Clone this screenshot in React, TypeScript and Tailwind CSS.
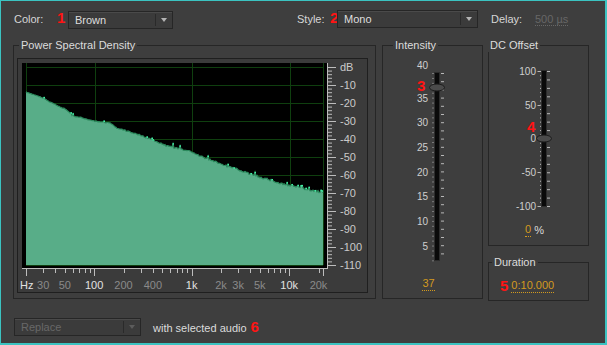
import React from 'react';

const anchors: [number, number][] = [
  [26, 92], [43, 98], [50, 102], [67, 110], [73, 116], [80, 117], [93, 121], [110, 123],
  [117, 128], [140, 135], [150, 139], [167, 146], [180, 149], [190, 151], [200, 156],
  [213, 161], [230, 167], [253, 175], [280, 183], [313, 191], [323, 192],
];

function rng(seed: number) {
  let a = seed;
  return () => {
    a |= 0;
    a = (a + 0x6d2b79f5) | 0;
    let t = Math.imul(a ^ (a >>> 15), 1 | a);
    t = (t + Math.imul(t ^ (t >>> 7), 61 | t)) ^ t;
    return ((t ^ (t >>> 14)) >>> 0) / 4294967296;
  };
}

function baseAt(x: number) {
  for (let i = 0; i < anchors.length - 1; i++) {
    const [x0, y0] = anchors[i];
    const [x1, y1] = anchors[i + 1];
    if (x >= x0 && x <= x1) return y0 + ((y1 - y0) * (x - x0)) / (x1 - x0);
  }
  return anchors[anchors.length - 1][1];
}

const rand = rng(7);
const spectrum: { x: number; y: number; spike: boolean }[] = [];
for (let x = 26; x <= 323; x++) {
  const p = (x - 26) / 297;
  let y = baseAt(x) + (rand() - 0.5) * (0.6 + p * 1.6);
  const spike = rand() < 0.05 + p * 0.12;
  if (spike) y -= 1 + rand() * 2.2;
  spectrum.push({ x, y, spike });
}
const linePts = spectrum.map((s) => `${s.x},${s.y.toFixed(1)}`).join(' ');
const fillPath = `M26,265 L${spectrum.map((s) => `${s.x},${s.y.toFixed(1)}`).join(' L')} L323,265 Z`;

const fx = (f: number) => 26 + 97.5 * Math.log10(f / 20);
const hzTicks = [20, 30, 40, 50, 60, 70, 80, 90, 100, 200, 300, 400, 500, 600, 700, 800, 900, 1000, 2000, 3000, 4000, 5000, 6000, 7000, 8000, 9000, 10000, 20000];
const hzLabels: [string, number, boolean][] = [
  ['30', 30, false], ['50', 50, false], ['100', 100, true], ['200', 200, false], ['400', 400, false],
  ['1k', 1000, true], ['2k', 2000, false], ['3k', 3000, false], ['5k', 5000, false], ['10k', 10000, true], ['20k', 20000, false],
];

function Dropdown({ label, width, disabled }: { label: string; width: string; disabled?: boolean }) {
  return (
    <div className={`${width} h-[18px] flex items-center border border-[#262626] bg-[#3b3b3b] shadow-[inset_0_1px_0_#4a4a4a]`}>
      <span className={`flex-1 pl-[6px] text-[11px] ${disabled ? 'text-[#686868]' : 'text-[#dedede]'}`}>{label}</span>
      <span className="w-px h-[12px] bg-[#2a2a2a]" />
      <span className="w-[16px] flex justify-center">
        <span className={`w-0 h-0 border-l-[3px] border-r-[3px] border-t-[4px] border-l-transparent border-r-transparent ${disabled ? 'border-t-[#5c5c5c]' : 'border-t-[#b4b4b4]'}`} />
      </span>
    </div>
  );
}

function Group({ title, titleLeft, className, children }: { title: string; titleLeft: string; className: string; children?: React.ReactNode }) {
  return (
    <div className={`relative border border-[#262626] ${className}`}>
      <span className={`absolute top-[-8px] ${titleLeft} px-[2px] bg-[#3e3e3e] text-[11px] leading-[14px] text-[#dcdcdc]`}>{title}</span>
      {children}
    </div>
  );
}

function Red({ n }: { n: string }) {
  return <span className="text-[15px] font-bold text-[#ff1414] leading-none">{n}</span>;
}

function SpectrumPlot() {
  const dbTicks = [];
  for (let k = 0; k <= 55; k++) {
    const y = 67 + k * 3.6;
    dbTicks.push(<line key={k} x1={327} x2={k % 5 === 0 ? 336 : 332} y1={y + 0.5} y2={y + 0.5} stroke="#bdbdbd" strokeWidth={1} />);
  }
  return (
    <svg width={349} height={233} viewBox="18 59 349 233" className="block">
      <rect x={22} y={63} width={305} height={205} fill="#000" />
      {Array.from({ length: 12 }, (_, k) => (
        <line key={k} x1={26} x2={323} y1={67.5 + k * 18} y2={67.5 + k * 18} stroke="#0f3f0f" strokeWidth={1} />
      ))}
      {[26, 95, 192, 290, 323].map((x) => (
        <line key={x} x1={x + 0.5} x2={x + 0.5} y1={63} y2={265} stroke="#0f3f0f" strokeWidth={1} />
      ))}
      <path d={fillPath} fill="#58ad88" />
      <polyline points={linePts} fill="none" stroke="#2c8a5d" strokeWidth={1.2} />
      {spectrum.filter((s) => s.spike).map((s) => (
        <rect key={s.x} x={s.x - 0.5} y={s.y - 0.5} width={1.5} height={1.5} fill="#44f0a6" />
      ))}
      <line x1={327.5} x2={327.5} y1={63} y2={268} stroke="#bdbdbd" />
      {dbTicks}
      <text x={340} y={71} fontSize={11} fill="#cacaca">dB</text>
      {Array.from({ length: 11 }, (_, k) => (
        <text key={k} x={340} y={89 + k * 18} fontSize={11} fill="#cacaca">{`-${(k + 1) * 10}`}</text>
      ))}
      <line x1={22} x2={328} y1={268.5} y2={268.5} stroke="#bdbdbd" />
      {hzTicks.map((f) => {
        const major = f === 20 || f === 100 || f === 1000 || f === 10000;
        const x = Math.round(fx(f)) + 0.5;
        return <line key={f} x1={x} x2={x} y1={268} y2={major ? 276 : 273} stroke="#bdbdbd" />;
      })}
      <line x1={323.5} x2={323.5} y1={268} y2={276} stroke="#bdbdbd" />
      <text x={20} y={289} fontSize={11} fill="#e2e2e2">Hz</text>
      {hzLabels.map(([t, f, major]) => (
        <text key={t} x={fx(f)} y={289} fontSize={11} textAnchor="middle" fill={major ? '#e2e2e2' : '#8a8a8a'}>{t}</text>
      ))}
    </svg>
  );
}

function IntensitySlider() {
  const labels: [string, number][] = [['40', 65], ['35', 98], ['30', 122], ['25', 147], ['20', 172], ['15', 196], ['10', 221], ['5', 246]];
  return (
    <svg width={98} height={215} viewBox="383 55 98 215" className="block">
      {Array.from({ length: 39 }, (_, k) => (
        <rect key={k} x={432.5} y={73 + k * 4.93} width={1} height={1} fill="#b8b8b8" />
      ))}
      {Array.from({ length: 23 }, (_, k) => (
        <line key={k} x1={441} x2={444} y1={73.5 + k * 8.2} y2={73.5 + k * 8.2} stroke="#b8b8b8" />
      ))}
      {labels.map(([t, y]) => (
        <text key={t} x={428} y={y + 3.5} fontSize={10} textAnchor="end" fill="#cfcfcf">{t}</text>
      ))}
      <rect x={434.5} y={72.5} width={5} height={188} fill="#0a0a0a" stroke="#2c2c2c" />
      <ellipse cx={437} cy={87.5} rx={7.5} ry={3.5} fill="#4b4b4b" stroke="#1c1c1c" />
      <text x={417} y={91} fontSize={15} fontWeight="bold" fill="#ff1414">3</text>
    </svg>
  );
}

function DcSlider() {
  const labels: [string, number][] = [['100', 71], ['50', 105], ['0', 138.5], ['-50', 172], ['-100', 206]];
  return (
    <svg width={98} height={155} viewBox="489 60 98 155" className="block">
      {Array.from({ length: 33 }, (_, k) => (
        <rect key={k} x={540} y={71 + k * 4.22} width={1} height={1} fill="#b8b8b8" />
      ))}
      {Array.from({ length: 17 }, (_, k) => (
        <line key={k} x1={547} x2={550} y1={71.5 + k * 8.44} y2={71.5 + k * 8.44} stroke="#b8b8b8" />
      ))}
      {labels.map(([t, y]) => (
        <g key={t}>
          <text x={536} y={y + 3.5} fontSize={10} textAnchor="end" fill="#cfcfcf">{t}</text>
          <line x1={537.5} x2={540} y1={y + 0.5} y2={y + 0.5} stroke="#b8b8b8" />
        </g>
      ))}
      <rect x={541.5} y={70.5} width={5} height={136} fill="#0a0a0a" stroke="#2c2c2c" />
      <ellipse cx={544} cy={138.5} rx={7.5} ry={3.5} fill="#4b4b4b" stroke="#1c1c1c" />
      <text x={527} y={132} fontSize={15} fontWeight="bold" fill="#ff1414">4</text>
    </svg>
  );
}

export default function App() {
  return (
    <div className="w-[607px] h-[345px] overflow-hidden bg-[#3e3e3e] border-l border-t border-r-2 border-b-2 border-[#3bc3c1] font-['Liberation_Sans',Arial,sans-serif] text-[#d6d6d6]">
      <div className="flex items-center h-[18px] mt-[9px] pl-[13px] text-[11px]">
        <span className="w-[43px]">Color:</span>
        <span className="w-[11px]"><Red n="1" /></span>
        <div className="mt-[2px]"><Dropdown label="Brown" width="w-[105px]" /></div>
        <span className="w-[124px]" />
        <span className="w-[33px]">Style:</span>
        <span className="w-[7px]"><Red n="2" /></span>
        <Dropdown label="Mono" width="w-[141px]" />
        <span className="ml-[13px] w-[44px]">Delay:</span>
        <span className="text-[#676767] border-b border-dotted border-[#676767] leading-[12px]">500 µs</span>
      </div>

      <div className="flex mt-[17px] pl-[12px]">
        <Group title="Power Spectral Density" titleLeft="left-[5px]" className="w-[363px] h-[254px] pl-[3px] pt-[12px]">
          <div className="w-[351px] h-[235px] border border-[#1f1f1f] bg-[#3b3b3b]">
            <SpectrumPlot />
          </div>
        </Group>

        <Group title="Intensity" titleLeft="left-[10px]" className="ml-[6px] w-[101px] h-[254px] pt-[9px]">
          <IntensitySlider />
          <div className="mt-[7px] flex justify-center pr-[8px]">
            <span className="text-[11px] leading-[13px] text-[#d39a1e] border-b border-dotted border-[#d39a1e]">37</span>
          </div>
        </Group>

        <div className="ml-[5px] flex flex-col">
          <Group title="DC Offset" titleLeft="left-[-1px]" className="w-[101px] h-[201px] pt-[14px]">
            <DcSlider />
            <div className="mt-[8px] flex items-center pl-[36px] text-[11px] leading-[13px]">
              <span className="text-[#d39a1e] border-b border-dotted border-[#d39a1e]">0</span>
              <span className="ml-[3px] text-[#dcdcdc]">%</span>
            </div>
          </Group>
          <Group title="Duration" titleLeft="left-[3px]" className="mt-[16px] w-[101px] h-[39px] pt-[15px] pl-[11px]">
            <div className="flex items-center">
              <Red n="5" />
              <span className="ml-[3px] text-[11px] leading-[13px] text-[#d39a1e] border-b border-dotted border-[#d39a1e]">0:10.000</span>
            </div>
          </Group>
        </div>
      </div>

      <div className="flex items-center mt-[17px] pl-[13px] text-[11px]">
        <Dropdown label="Replace" width="w-[127px]" disabled />
        <span className="ml-[12px] mt-[2px] text-[#dcdcdc]">with selected audio</span>
        <span className="ml-[4px]"><Red n="6" /></span>
      </div>
    </div>
  );
}
